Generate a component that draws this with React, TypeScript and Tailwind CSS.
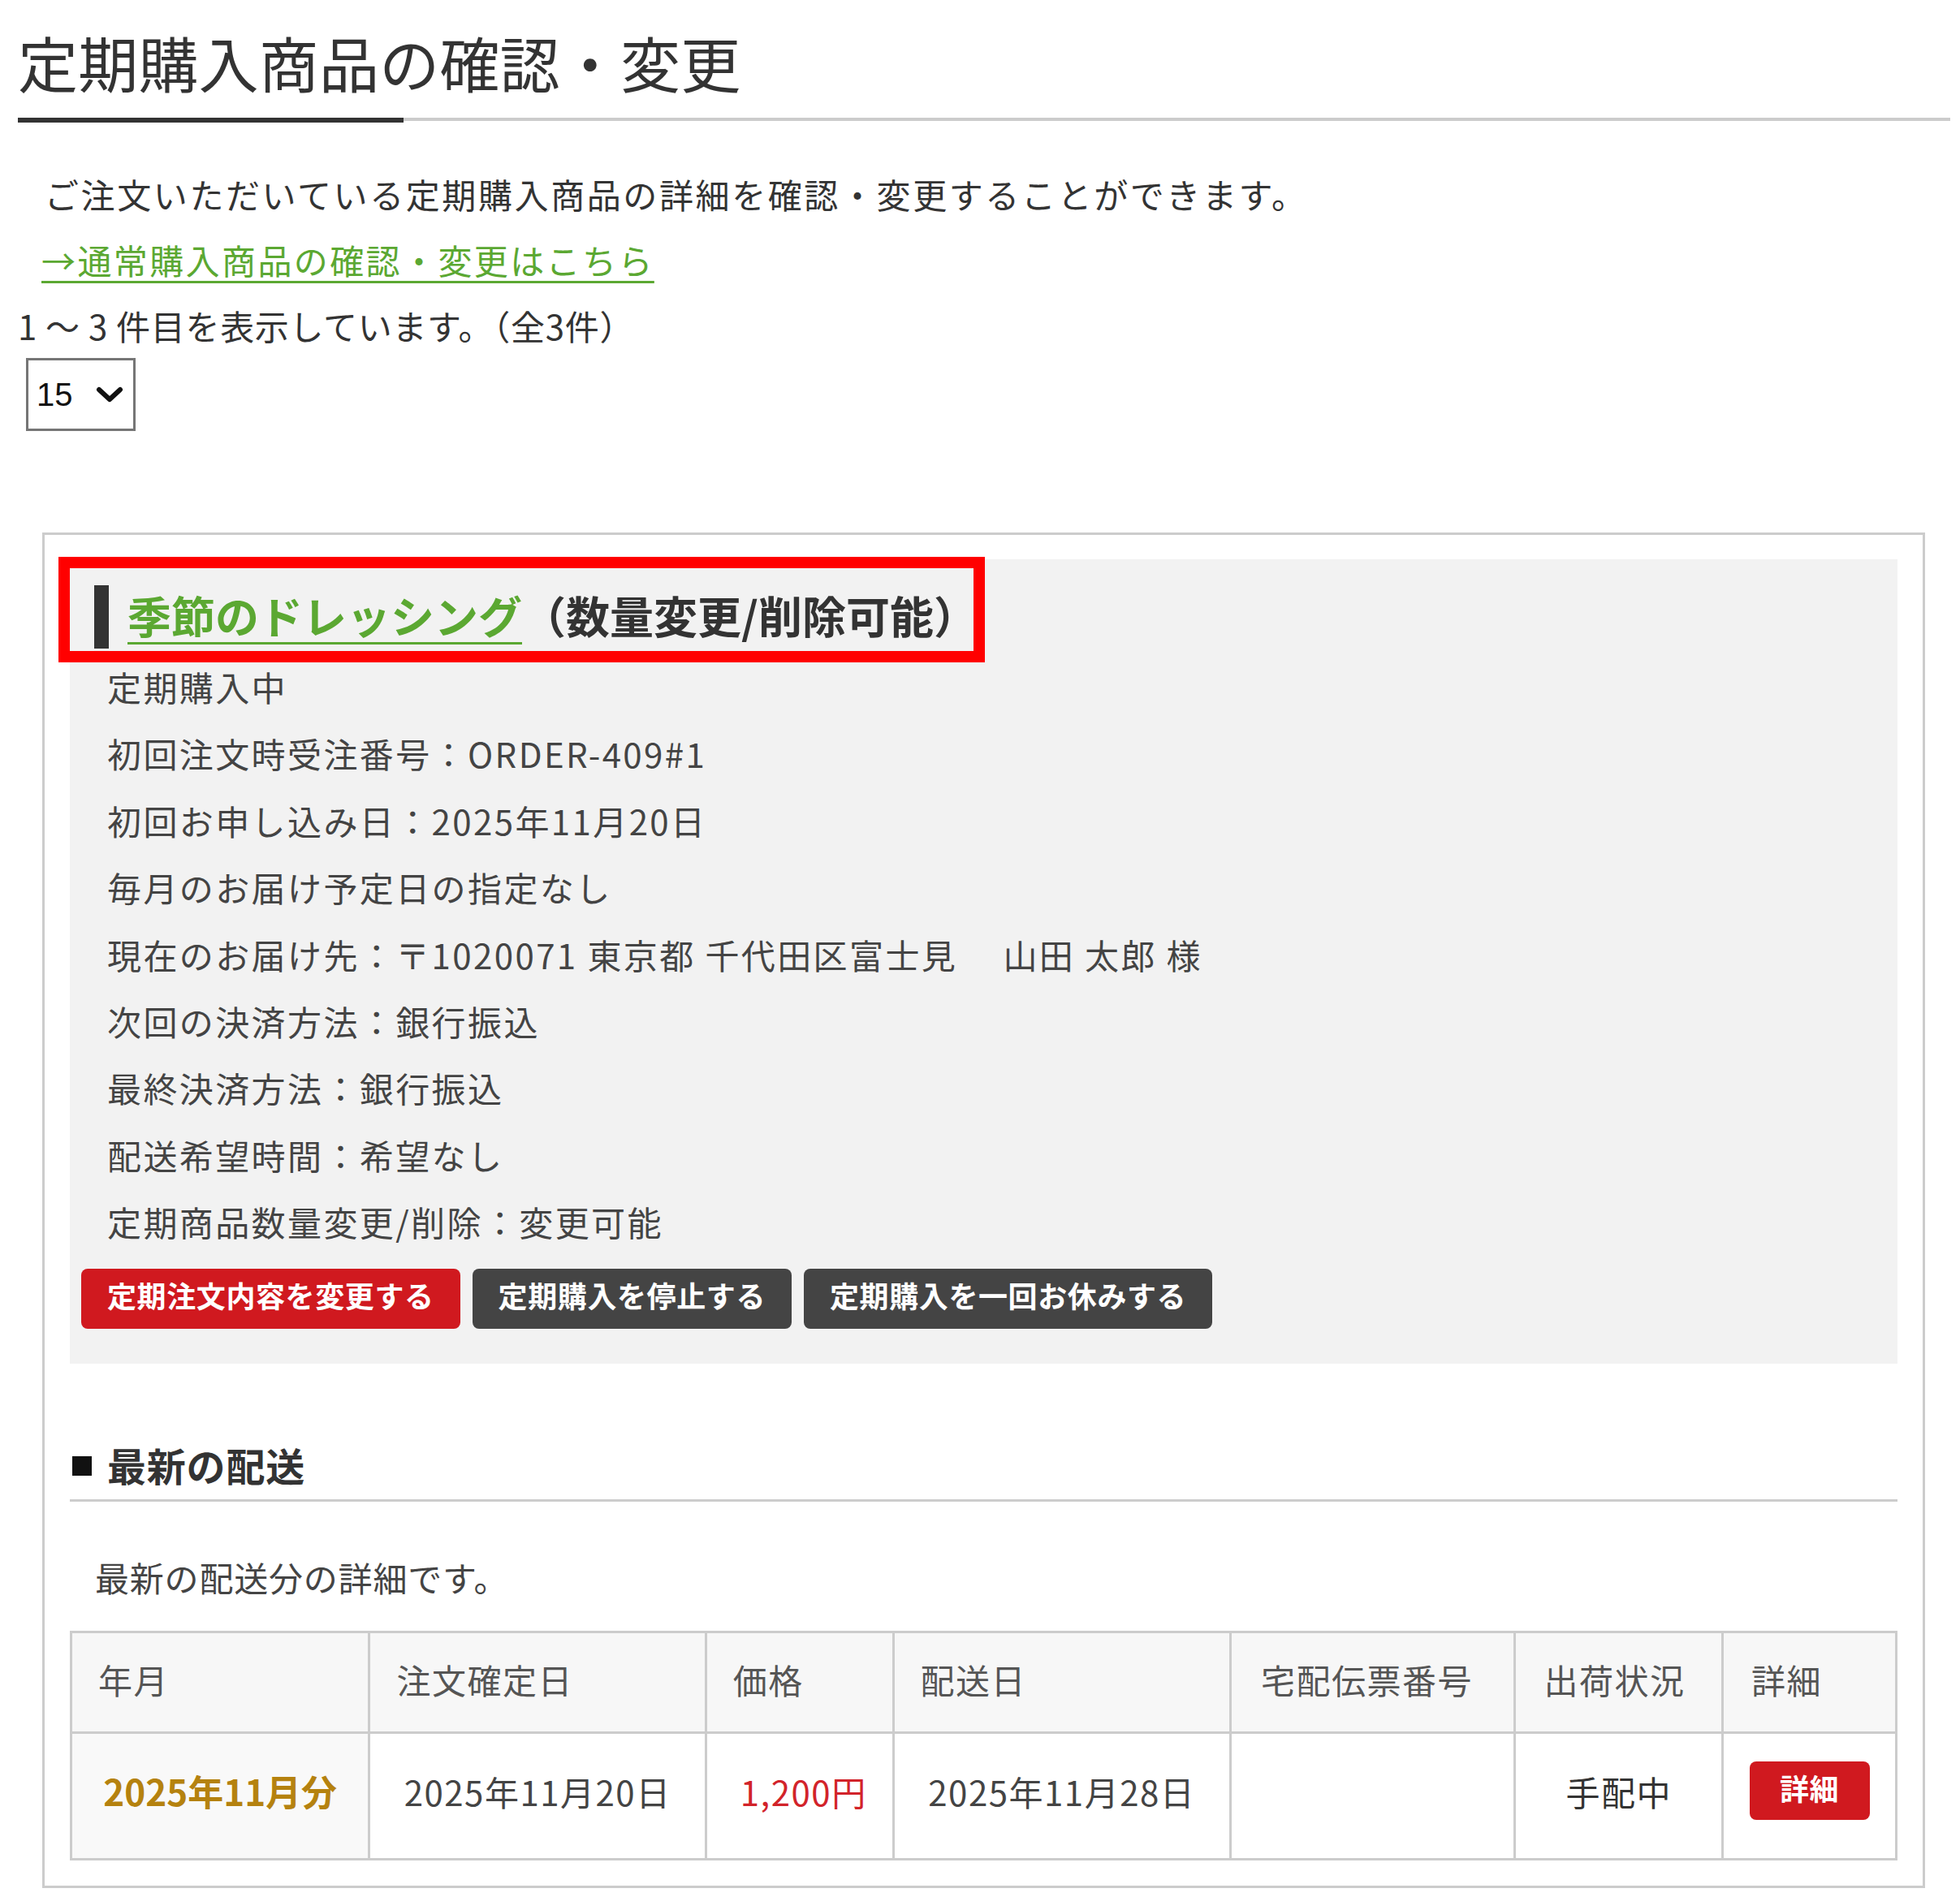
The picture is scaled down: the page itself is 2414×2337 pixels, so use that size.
import React from "react";

const infoLines = [
  "定期購入中",
  "初回注文時受注番号：ORDER-409#1",
  "初回お申し込み日：2025年11月20日",
  "毎月のお届け予定日の指定なし",
  "現在のお届け先：〒1020071 東京都 千代田区富士見　 山田 太郎 様",
  "次回の決済方法：銀行振込",
  "最終決済方法：銀行振込",
  "配送希望時間：希望なし",
  "定期商品数量変更/削除：変更可能",
];

export default function App() {
  return (
    <div className="w-[2414px] min-h-[2337px] bg-white pl-[22px] pr-[12px] pb-[10px] font-['Noto_Sans_CJK_JP','Noto_Sans',sans-serif] text-[#333]">
      {/* Title */}
      <h1 className="pt-[32px] text-[74px] leading-[88px] font-normal text-[#333] tracking-[0.2px]">
        定期購入商品の確認・変更
      </h1>
      <div className="mt-[25px] flex items-start">
        <div className="w-[475px] h-[6px] bg-[#333]" />
        <div className="flex-1 h-[4px] bg-[#cccccc]" />
      </div>

      {/* Intro */}
      <p className="mt-[47px] pl-[33px] text-[42px] leading-[81px] tracking-[2.6px] text-[#333]">
        ご注文いただいている定期購入商品の詳細を確認・変更することができます。
      </p>
      <p className="pl-[29px] text-[42px] leading-[81px] tracking-[2.4px]">
        <a className="text-[#5ba832] underline decoration-[3px] underline-offset-[8px]" href="#">
          →通常購入商品の確認・変更はこちら
        </a>
      </p>
      <p className="text-[42px] leading-[81px] tracking-[0.7px] text-[#333]">
        1 ～ 3 件目を表示しています。（全3件）
      </p>
      <div className="ml-[10px] w-[135px] h-[90px] border-[3px] border-[#767676] flex items-center pl-[10px] pr-[12px] justify-between bg-white">
        <span className="text-[40px] leading-none text-[#111] font-['Liberation_Sans',sans-serif]">15</span>
        <svg width="34" height="20" viewBox="0 0 34 20">
          <path d="M4 4 L17 16 L30 4" fill="none" stroke="#111" strokeWidth="6" strokeLinecap="round" strokeLinejoin="round" />
        </svg>
      </div>

      {/* Card */}
      <div className="relative mt-[125px] ml-[30px] w-[2319px] border-[3px] border-[#cccccc] pt-[30px] px-[31px] pb-[31px]">
        {/* Gray panel */}
        <div className="bg-[#f2f2f2] pt-[32px] pb-[43px]">
          <div className="h-[78px] pl-[30px] flex items-center">
            <div className="w-[18px] h-[78px] bg-[#333]" />
            <div className="ml-[23px] text-[54px] leading-[78px] font-bold flex items-center pb-[4px]">
              <a href="#" className="text-[#5ba832] underline decoration-[3px] underline-offset-[10px]">
                季節のドレッシング
              </a>
              <span className="text-[#333]">（数量変更/削除可能）</span>
            </div>
          </div>
          <div className="mt-[6px] pl-[46px]">
            {infoLines.map((l) => (
              <div key={l} className="text-[42px] leading-[82.4px] tracking-[2.4px] text-[#444] whitespace-pre">
                {l}
              </div>
            ))}
          </div>
          <div className="mt-[16px] pl-[14px] flex gap-[15px]">
            <button className="h-[74px] px-[32px] pb-[10px] rounded-[8px] bg-[#d0191f] text-white text-[36px] font-bold tracking-[0.6px] leading-none">
              定期注文内容を変更する
            </button>
            <button className="h-[74px] px-[32px] pb-[10px] rounded-[8px] bg-[#444444] text-white text-[36px] font-bold tracking-[0.6px] leading-none">
              定期購入を停止する
            </button>
            <button className="h-[74px] px-[32px] pb-[10px] rounded-[8px] bg-[#444444] text-white text-[36px] font-bold tracking-[0.6px] leading-none">
              定期購入を一回お休みする
            </button>
          </div>
        </div>

        {/* Latest delivery */}
        <div className="mt-[91px] pb-[10px] border-b-[3px] border-[#cccccc] flex items-center pl-[3px]">
          <span className="w-[24px] h-[24px] bg-[#111] mt-[4px]" />
          <h2 className="ml-[19px] text-[48px] leading-[66px] font-bold text-[#333] tracking-[0.8px]">
            最新の配送
          </h2>
        </div>
        <p className="mt-[52px] pl-[31px] text-[42px] leading-[82px] tracking-[0.8px] text-[#444]">
          最新の配送分の詳細です。
        </p>

        <table className="mt-[25px] w-full border-collapse border-[3px] border-[#cccccc] text-[42px] tracking-[1.5px]">
          <colgroup>
            <col className="w-[368px]" />
            <col className="w-[415px]" />
            <col className="w-[231px]" />
            <col className="w-[416px]" />
            <col className="w-[351px]" />
            <col className="w-[256px]" />
            <col className="w-[214px]" />
          </colgroup>
          <thead>
            <tr className="h-[124px] bg-[#f7f7f7] text-[#555]">
              <th className="border-[3px] border-[#cccccc] text-left font-normal pl-[32px] pb-[8px]">年月</th>
              <th className="border-[3px] border-[#cccccc] text-left font-normal pl-[32px] pb-[8px]">注文確定日</th>
              <th className="border-[3px] border-[#cccccc] text-left font-normal pl-[32px] pb-[8px]">価格</th>
              <th className="border-[3px] border-[#cccccc] text-left font-normal pl-[32px] pb-[8px]">配送日</th>
              <th className="border-[3px] border-[#cccccc] text-left font-normal pl-[36px] pb-[8px]">宅配伝票番号</th>
              <th className="border-[3px] border-[#cccccc] text-left font-normal pl-[34px] pb-[8px]">出荷状況</th>
              <th className="border-[3px] border-[#cccccc] text-left font-normal pl-[34px] pb-[8px]">詳細</th>
            </tr>
          </thead>
          <tbody>
            <tr className="h-[156px]">
              <td className="border-[3px] border-[#cccccc] bg-[#f9f9f9] text-center font-bold text-[#b5820f] text-[44px] tracking-[0px] pb-[12px]">
                2025年11月分
              </td>
              <td className="border-[3px] border-[#cccccc] text-center text-[#444] pb-[12px]">2025年11月20日</td>
              <td className="border-[3px] border-[#cccccc] text-center text-[#d2232a] pl-[10px] pb-[12px]">1,200円</td>
              <td className="border-[3px] border-[#cccccc] text-center text-[#444] pb-[12px]">2025年11月28日</td>
              <td className="border-[3px] border-[#cccccc]" />
              <td className="border-[3px] border-[#cccccc] text-center text-[#333] pb-[12px]">手配中</td>
              <td className="border-[3px] border-[#cccccc] text-center pb-[14px]">
                <button className="w-[148px] h-[72px] pb-[8px] rounded-[8px] bg-[#d0191f] text-white text-[36px] font-bold leading-none tracking-[0.5px]">
                  詳細
                </button>
              </td>
            </tr>
          </tbody>
        </table>

        {/* Annotation overlay */}
        <div className="pointer-events-none absolute left-[17px] top-[27px] w-[1141px] h-[130px] border-[14px] border-[#ff0000]" />
      </div>
    </div>
  );
}
